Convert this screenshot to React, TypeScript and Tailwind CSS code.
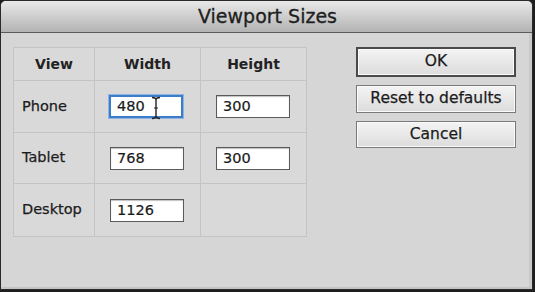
import React from "react";

const font = { fontFamily: '"DejaVu Sans", "Liberation Sans", sans-serif' };

function Field({ value, focused, cursor }: { value: string; focused?: boolean; cursor?: boolean }) {
  return (
    <div
      className={
        "relative w-[74px] h-[23px] bg-white flex items-center pl-[6px] text-[14.5px] text-[#1a1a1a] [-webkit-text-stroke:0.2px_#1a1a1a] " +
        (focused
          ? "border-2 border-[#3d7cc9] shadow-[0_0_0_1px_#8fb4e3]"
          : "border border-[#5a5a5a] shadow-[inset_0_1px_1px_rgba(0,0,0,0.25)]")
      }
    >
      <span className="leading-none">{value}</span>
      {cursor && (
        <svg className="absolute left-[40px] top-[-1px]" width="10" height="24" viewBox="0 0 10 24">
          <path d="M1 1.5 Q5 1.5 5 4 L5 20 Q5 22.5 1 22.5 M9 1.5 Q5 1.5 5 4 M5 20 Q5 22.5 9 22.5" fill="none" stroke="#222" strokeWidth="1.4" />
          <path d="M3 12 L7 12" stroke="#222" strokeWidth="1.2" />
        </svg>
      )}
    </div>
  );
}

function Cell({ children, className = "" }: { children?: React.ReactNode; className?: string }) {
  return <div className={"border-r border-b border-[#c4c4c4] flex items-center " + className}>{children}</div>;
}

const label = "pl-[8px] text-[14.5px] text-[#1c1c1c] [-webkit-text-stroke:0.25px_#1c1c1c]";
const head = "justify-center font-bold text-[14px] text-[#222]";
const btn =
  "w-[160px] bg-gradient-to-b from-[#f4f4f4] to-[#dcdcdc] shadow-[inset_0_0_0_1px_#fafafa] text-[15.5px] text-[#1c1c1c] [-webkit-text-stroke:0.25px_#1c1c1c] flex items-center justify-center";

export default function App() {
  return (
    <div className="w-[535px] h-[292px] bg-[#1e1e1e]" style={font}>
      <div className="w-[533px] h-[290px] rounded-t-[6px] border border-[#2a2a2a] flex flex-col overflow-hidden bg-[#d6d6d6]">
        <div className="h-[32px] shrink-0 bg-gradient-to-b from-[#e9e9e9] to-[#b3b3b3] border-b border-[#5c5c5c] flex items-center justify-center">
          <span className="text-[19px] text-[#1e1e1e] [-webkit-text-stroke:0.3px_#1e1e1e] pl-[2px] leading-none">Viewport Sizes</span>
        </div>
        <div className="flex-1 flex pl-[12px] pt-[14px] border-r-[3px] border-r-[#c9c9c9] border-b-2 border-b-[#c4c4c4]">
          <div className="grid grid-cols-[81px_106px_106px] grid-rows-[33px_52px_51px_53px] border-l border-t border-[#c4c4c4] self-start bg-[#d9d9d9]">
            <Cell className={head}>View</Cell>
            <Cell className={head}>Width</Cell>
            <Cell className={head}>Height</Cell>

            <Cell className={label}>Phone</Cell>
            <Cell className="pl-[14px]"><Field value="480" focused cursor /></Cell>
            <Cell className="pl-[15px]"><Field value="300" /></Cell>

            <Cell className={label}>Tablet</Cell>
            <Cell className="pl-[15px]"><Field value="768" /></Cell>
            <Cell className="pl-[15px]"><Field value="300" /></Cell>

            <Cell className={label}>Desktop</Cell>
            <Cell className="pl-[15px]"><Field value="1126" /></Cell>
            <Cell />
          </div>
          <div className="ml-[49px] flex flex-col gap-[8px]">
            <button className={btn + " h-[30px] border-2 border-[#4a4a4a]"}>OK</button>
            <button className={btn + " h-[28px] border border-[#7a7a7a]"}>Reset to defaults</button>
            <button className={btn + " h-[27px] border border-[#7a7a7a]"}>Cancel</button>
          </div>
        </div>
      </div>
    </div>
  );
}
